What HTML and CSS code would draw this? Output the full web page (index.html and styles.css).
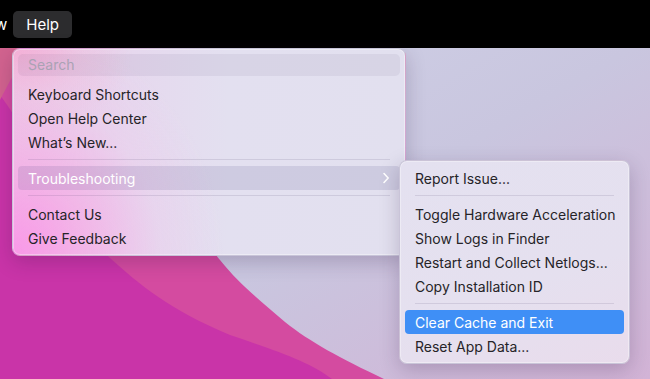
FILE: index.html
```html
<!DOCTYPE html>
<html lang="en">
<head>
    <meta charset="UTF-8">
    <meta name="viewport" content="width=device-width, initial-scale=1.0">
    <title>Help Menu</title>
    <link rel="stylesheet" href="styles.css">
</head>
<body>
    <div class="desktop">
        <!-- wallpaper -->
        <svg class="wallpaper" viewBox="0 0 650 379" preserveAspectRatio="none">
            <defs>
                <linearGradient id="sky" x1="0" y1="0" x2="1" y2="1">
                    <stop offset="0" stop-color="#d3d6ea"/>
                    <stop offset="0.55" stop-color="#c9c6df"/>
                    <stop offset="1" stop-color="#d2b3d6"/>
                </linearGradient>
            </defs>
            <rect width="650" height="379" fill="url(#sky)"/>
            <path d="M0,48 L160,48 C190,150 200,240 220,260 C240,285 260,300 285,322 C310,342 340,358 384,379 L0,379 Z" fill="#d44ba0"/>
            <path d="M0,95 C40,150 80,230 110,258 C140,285 170,310 230,335 C280,352 310,362 332,379 L0,379 Z" fill="#c934a8"/>
            <path d="M0,48 L30,48 C15,70 8,85 0,100 Z" fill="#d2638f"/>
        </svg>

        <header class="menubar">
            <span class="menubar-item cut">w</span>
            <span class="menubar-item active">Help</span>
        </header>

        <div class="menu help-menu">
            <div class="search">Search</div>
            <div class="item">Keyboard Shortcuts</div>
            <div class="item">Open Help Center</div>
            <div class="item">What’s New...</div>
            <div class="sep"></div>
            <div class="item open">
                <span>Troubleshooting</span>
                <svg class="chevron" viewBox="0 0 8 12"><path d="M2 1.5 L6.2 6 L2 10.5" fill="none" stroke="currentColor" stroke-width="1.6" stroke-linecap="round" stroke-linejoin="round"/></svg>
            </div>
            <div class="sep"></div>
            <div class="item">Contact Us</div>
            <div class="item">Give Feedback</div>
        </div>

        <div class="menu submenu">
            <div class="item">Report Issue...</div>
            <div class="sep"></div>
            <div class="item">Toggle Hardware Acceleration</div>
            <div class="item">Show Logs in Finder</div>
            <div class="item">Restart and Collect Netlogs...</div>
            <div class="item">Copy Installation ID</div>
            <div class="sep"></div>
            <div class="item selected">Clear Cache and Exit</div>
            <div class="item">Reset App Data...</div>
        </div>
    </div>
</body>
</html>
```

FILE: styles.css
```css
html, body {
    margin: 0;
    padding: 0;
}
body {
    font-family: Inter, "Noto Sans", "Liberation Sans", sans-serif;
    color: #262428;
    overflow: hidden;
}
.desktop {
    position: relative;
    width: 650px;
    height: 379px;
    overflow: hidden;
}
.wallpaper {
    position: absolute;
    left: 0;
    top: 0;
    width: 650px;
    height: 379px;
    display: block;
}
.menubar {
    position: relative;
    height: 48px;
    background: #000;
    display: flex;
    align-items: center;
    gap: 6px;
    margin-left: -5px;
}
.menubar-item {
    color: #fff;
    font-size: 15px;
    line-height: 27px;
    padding: 0 13px;
    border-radius: 5px;
}
.menubar-item.cut {
    padding: 0;
}
.menubar-item.active {
    background: #2c2c2e;
}

/* menus */
.menu {
    position: absolute;
    padding: 5px;
    border-radius: 8px;
    border: 1px solid rgba(80, 70, 110, 0.18);
    box-shadow: 0 6px 20px rgba(40, 20, 60, 0.22), inset 0 0 0 1px rgba(255, 255, 255, 0.35);
    font-size: 14px;
    display: flex;
    flex-direction: column;
}
.help-menu {
    left: 12px;
    top: 48px;
    width: 382px;
    background:
        radial-gradient(ellipse 210px 230px at 0% 100%, rgba(250, 150, 232, 0.95) 0%, rgba(246, 170, 230, 0.7) 35%, rgba(238, 200, 236, 0.3) 70%, rgba(228, 224, 240, 0) 100%),
        radial-gradient(ellipse 120px 90px at 0% 0%, rgba(245, 170, 210, 0.9) 0%, rgba(240, 190, 220, 0.4) 60%, rgba(228, 224, 240, 0) 100%),
        linear-gradient(90deg, #ecc6e6 0%, #e6d8ee 30%, #e3e0f0 55%, #e2e0ef 100%);
}
.submenu {
    left: 399px;
    top: 160px;
    width: 219px;
    background: linear-gradient(160deg, #e4e1f0 0%, #e5e0ef 60%, #e9dcec 100%);
}
.search {
    height: 22px;
    line-height: 22px;
    padding: 0 10px;
    margin-bottom: 6px;
    border-radius: 5px;
    background: rgba(70, 60, 100, 0.07);
    color: #aaa2b4;
}
.item {
    height: 24px;
    line-height: 25px;
    padding: 0 10px;
    border-radius: 4px;
    display: flex;
    align-items: center;
    justify-content: space-between;
    white-space: nowrap;
}
.item.open {
    background: rgba(70, 60, 120, 0.13);
    color: #fff;
}
.item.selected {
    background: #3f8ff6;
    color: #fff;
}
.chevron {
    width: 8px;
    height: 12px;
    margin-right: 0;
}
.sep {
    height: 1px;
    margin: 5px 10px 6px;
    background: rgba(60, 50, 90, 0.12);
}
```
